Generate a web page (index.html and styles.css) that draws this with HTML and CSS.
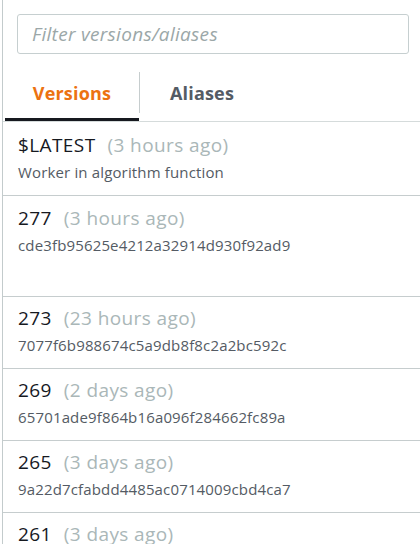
FILE: index.html
```html
<!DOCTYPE html>
<html>
<head>
<meta charset="utf-8">
<link rel="stylesheet" href="styles.css">
</head>
<body>
<div class="panel">
  <div class="search">
    <input class="search-input" type="text" placeholder="Filter versions/aliases">
  </div>
  <div class="tabs">
    <div class="tab tab-active">Versions</div>
    <div class="tab-divider"></div>
    <div class="tab">Aliases</div>
  </div>
  <ul class="list">
    <li class="row row-first">
      <div class="title"><span class="name">$LATEST</span><span class="ago">(3 hours ago)</span></div>
      <div class="sub">Worker in algorithm function</div>
    </li>
    <li class="row row-tall">
      <div class="title"><span class="name">277</span><span class="ago">(3 hours ago)</span></div>
      <div class="sub">cde3fb95625e4212a32914d930f92ad9</div>
    </li>
    <li class="row">
      <div class="title"><span class="name">273</span><span class="ago">(23 hours ago)</span></div>
      <div class="sub">7077f6b988674c5a9db8f8c2a2bc592c</div>
    </li>
    <li class="row">
      <div class="title"><span class="name">269</span><span class="ago">(2 days ago)</span></div>
      <div class="sub">65701ade9f864b16a096f284662fc89a</div>
    </li>
    <li class="row">
      <div class="title"><span class="name">265</span><span class="ago">(3 days ago)</span></div>
      <div class="sub">9a22d7cfabdd4485ac0714009cbd4ca7</div>
    </li>
    <li class="row row-last">
      <div class="title"><span class="name">261</span><span class="ago">(3 days ago)</span></div>
    </li>
  </ul>
</div>
</body>
</html>
```
FILE: styles.css
```css
html, body {
  margin: 0;
  padding: 0;
  background: #ffffff;
  overflow: hidden;
}
body {
  font-family: "Open Sans", "Noto Sans", sans-serif;
  color: #16191f;
  height: 544px;
}
.panel {
  margin-left: 2px;
  border-left: 1px solid #c3cbcc;
  height: 544px;
  overflow: hidden;
}
.search {
  padding: 14px 11px 0 14px;
}
.search-input {
  display: block;
  box-sizing: border-box;
  width: 100%;
  height: 40px;
  border: 1px solid #c6cfd0;
  border-radius: 3px;
  padding: 0 14px;
  font-family: "Open Sans", sans-serif;
  font-size: 19px;
  letter-spacing: 0.3px;
  outline: none;
}
.search-input::placeholder {
  color: #9ba7a8;
  font-style: italic;
}
.tabs {
  display: flex;
  align-items: center;
  margin-top: 12px;
  padding-left: 2px;
  border-bottom: 1px solid #d5dbdb;
}
.tab {
  box-sizing: border-box;
  height: 55px;
  padding-top: 1px;
  line-height: 52px;
  text-align: center;
  font-size: 18px;
  font-weight: 700;
  letter-spacing: 0.2px;
  color: #545b64;
  border-bottom: 3px solid transparent;
}
.tab-active {
  width: 134px;
  color: #ec7211;
  border-bottom-color: #16191f;
}
.tab-divider {
  width: 1px;
  height: 41px;
  background: #c6cdce;
  align-self: flex-start;
  margin-top: 6px;
}
.tab:last-child {
  width: 124px;
}
.list {
  list-style: none;
  margin: 0;
  padding: 0;
}
.row {
  box-sizing: border-box;
  height: 72px;
  padding: 10px 15px 0 15px;
  border-bottom: 1px solid #c6cdce;
}
.row-first {
  height: 74px;
  padding-top: 12px;
}
.row-tall {
  height: 101px;
  padding-top: 11px;
}
.row-last {
  height: 33px;
  padding-top: 10px;
  border-bottom: none;
}
.title {
  line-height: 22px;
  font-size: 19px;
  letter-spacing: 0.4px;
  white-space: nowrap;
}
.name {
  color: #16191f;
}
.ago {
  color: #aab7b8;
  margin-left: 12px;
}
.sub {
  margin-top: 6px;
  line-height: 20px;
  font-size: 15px;
  letter-spacing: 0.15px;
  color: #545b64;
  white-space: nowrap;
}
```
